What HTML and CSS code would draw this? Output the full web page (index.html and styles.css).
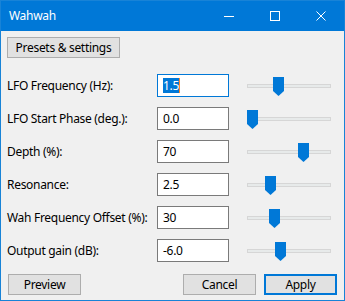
FILE: index.html
```html
<!DOCTYPE html>
<html lang="en">
<head>
  <meta charset="UTF-8">
  <title>Wahwah</title>
  <link rel="stylesheet" href="styles.css">
</head>
<body>
  <div class="window">
    <!-- Title bar -->
    <div class="titlebar">
      <span class="title">Wahwah</span>
      <div class="caption-buttons">
        <div class="caption-btn">
          <svg width="10" height="10" viewBox="0 0 10 10"><path d="M0 5.5h10" stroke="#fff" stroke-width="1"/></svg>
        </div>
        <div class="caption-btn">
          <svg width="10" height="10" viewBox="0 0 10 10"><rect x="0.5" y="0.5" width="9" height="9" fill="none" stroke="#fff" stroke-width="1"/></svg>
        </div>
        <div class="caption-btn">
          <svg width="10" height="10" viewBox="0 0 10 10"><path d="M0.5 0.5l9 9M9.5 0.5l-9 9" stroke="#fff" stroke-width="1"/></svg>
        </div>
      </div>
    </div>

    <div class="content">
      <button class="btn presets-btn">Presets &amp; settings</button>

      <!-- Effect parameters -->
      <div class="params">
        <div class="param-row">
          <label class="param-label">LFO Frequency (Hz):</label>
          <div class="text-box focused"><span class="selected">1.5</span><span class="caret"></span></div>
          <div class="slider"><div class="track"></div><svg class="thumb" style="left: 26px" width="11" height="19" viewBox="0 0 11 19"><path d="M0 0h11v14l-5.5 5l-5.5-5z" fill="#0078d7"/></svg></div>
        </div>
        <div class="param-row">
          <label class="param-label">LFO Start Phase (deg.):</label>
          <div class="text-box">0.0</div>
          <div class="slider"><div class="track"></div><svg class="thumb" style="left: 0px" width="11" height="19" viewBox="0 0 11 19"><path d="M0 0h11v14l-5.5 5l-5.5-5z" fill="#0078d7"/></svg></div>
        </div>
        <div class="param-row">
          <label class="param-label">Depth (%):</label>
          <div class="text-box">70</div>
          <div class="slider"><div class="track"></div><svg class="thumb" style="left: 51px" width="11" height="19" viewBox="0 0 11 19"><path d="M0 0h11v14l-5.5 5l-5.5-5z" fill="#0078d7"/></svg></div>
        </div>
        <div class="param-row">
          <label class="param-label">Resonance:</label>
          <div class="text-box">2.5</div>
          <div class="slider"><div class="track"></div><svg class="thumb" style="left: 18px" width="11" height="19" viewBox="0 0 11 19"><path d="M0 0h11v14l-5.5 5l-5.5-5z" fill="#0078d7"/></svg></div>
        </div>
        <div class="param-row">
          <label class="param-label">Wah Frequency Offset (%):</label>
          <div class="text-box">30</div>
          <div class="slider"><div class="track"></div><svg class="thumb" style="left: 22px" width="11" height="19" viewBox="0 0 11 19"><path d="M0 0h11v14l-5.5 5l-5.5-5z" fill="#0078d7"/></svg></div>
        </div>
        <div class="param-row">
          <label class="param-label">Output gain (dB):</label>
          <div class="text-box">-6.0</div>
          <div class="slider"><div class="track"></div><svg class="thumb" style="left: 28px" width="11" height="19" viewBox="0 0 11 19"><path d="M0 0h11v14l-5.5 5l-5.5-5z" fill="#0078d7"/></svg></div>
        </div>
      </div>

      <!-- Dialog buttons -->
      <div class="actions">
        <button class="btn">Preview</button>
        <div class="actions-right">
          <button class="btn">Cancel</button>
          <button class="btn default">Apply</button>
        </div>
      </div>
    </div>
  </div>
</body>
</html>
```

FILE: styles.css
```css
body {
  margin: 0;
  padding: 0;
  font-family: "Noto Sans", "Open Sans", sans-serif;
  font-size: 12px;
  letter-spacing: -0.3px;
  color: #000;
  background-color: #f0f0f0;
}

.window {
  width: 345px;
  height: 301px;
  box-sizing: border-box;
  border: 1px solid #1883d7;
  background-color: #f0f0f0;
  display: flex;
  flex-direction: column;
}

.titlebar {
  height: 30px;
  background-color: #0078d7;
  display: flex;
  align-items: center;
  justify-content: space-between;
  flex-shrink: 0;
}

.title {
  color: #fff;
  margin-left: 8px;
  margin-top: -1px;
}

.caption-buttons {
  display: flex;
  height: 100%;
}

.caption-btn {
  width: 46px;
  height: 100%;
  display: flex;
  align-items: center;
  justify-content: center;
}

.content {
  flex: 1;
  display: flex;
  flex-direction: column;
  padding: 6px 7px 5px 6px;
}

.btn {
  font-family: inherit;
  font-size: 12px;
  letter-spacing: -0.3px;
  color: #000;
  height: 21px;
  width: 73px;
  padding: 0;
  background-color: #e1e1e1;
  border: 1px solid #adadad;
  border-radius: 0;
  box-sizing: border-box;
  outline: none;
  line-height: 17px;
}

.btn.default {
  border: 2px solid #0078d7;
  line-height: 15px;
}

.presets-btn {
  width: 113px;
  align-self: flex-start;
}

.params {
  margin-top: 16px;
  display: flex;
  flex-direction: column;
  gap: 10px;
}

.param-row {
  display: flex;
  align-items: center;
  height: 23px;
}

.param-label {
  width: 150px;
  flex-shrink: 0;
}

.text-box {
  width: 72px;
  height: 23px;
  box-sizing: border-box;
  border: 1px solid #7a7a7a;
  background-color: #fff;
  padding-left: 5px;
  line-height: 21px;
  display: flex;
  align-items: center;
  white-space: nowrap;
}

.text-box.focused {
  border-color: #0078d7;
}

.selected {
  background-color: #0078d7;
  color: #fff;
  line-height: 15px;
}

.caret {
  display: inline-block;
  width: 1px;
  height: 15px;
  background-color: #ff8828;
}

.slider {
  position: relative;
  width: 84px;
  height: 23px;
  margin-left: 18px;
}

.track {
  position: absolute;
  left: 0;
  right: 0;
  top: 10px;
  height: 4px;
  box-sizing: border-box;
  border: 1px solid #d6d6d6;
  background-color: #e7eaea;
}

.thumb {
  position: absolute;
  top: 3px;
}

.actions {
  margin-top: auto;
  display: flex;
  justify-content: space-between;
  padding-left: 1px;
}

.actions-right {
  display: flex;
  gap: 8px;
}
```
